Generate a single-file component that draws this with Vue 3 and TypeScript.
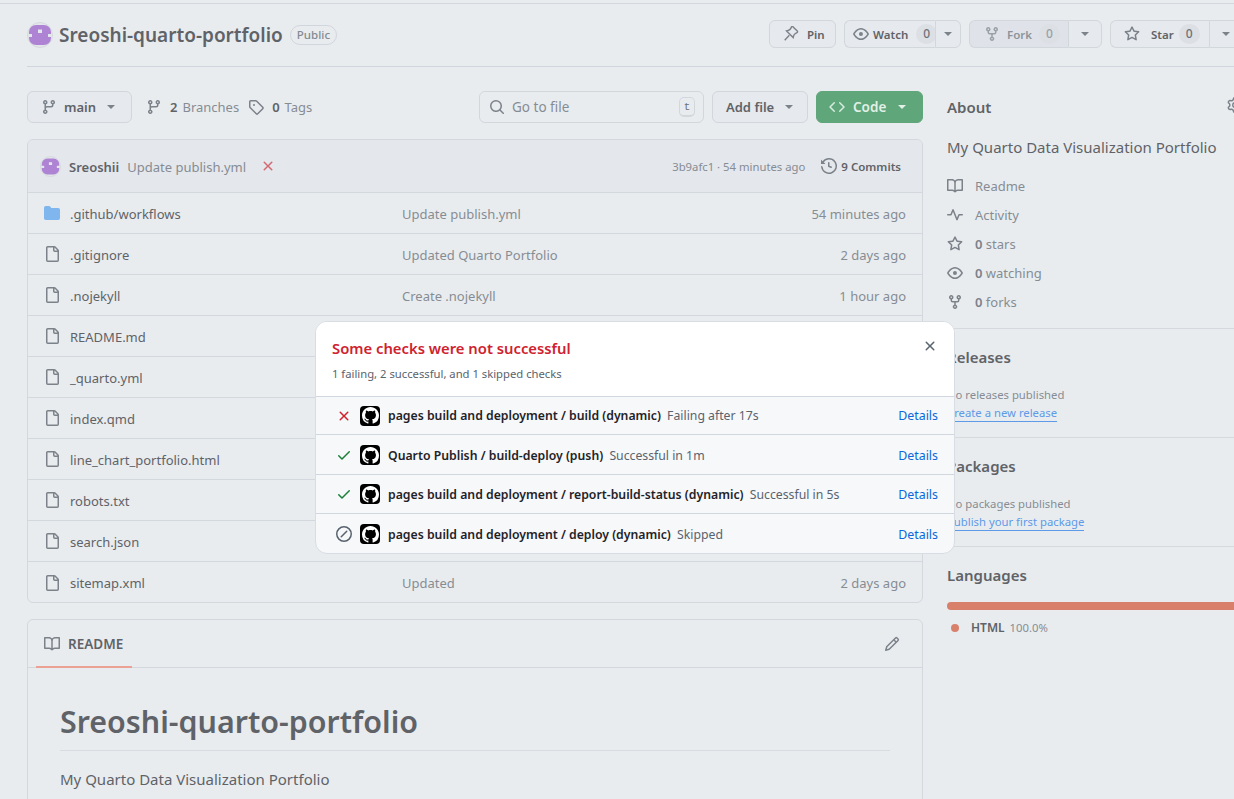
<template>
  <div class="page">
    <header class="repo-head">
      <div class="repo-title">
        <span class="avatar avatar--big">
          <svg viewBox="0 0 24 24"><path :d="identicon" /></svg>
        </span>
        <strong class="repo-name">Sreoshi-quarto-portfolio</strong>
        <span class="label">Public</span>
      </div>
      <div class="repo-actions">
        <button class="btn btn--small pin">
          <svg class="icon" viewBox="0 0 16 16"><path class="pin-line" d="M10.9 1.7l3.4 3.4a1 1 0 0 1-.3 1.6l-1.3.6a3.8 3.8 0 0 0-2.1 2.6l-.4 1.7-6.7-6.7 1.7-.4a3.8 3.8 0 0 0 2.6-2.1l.6-1.3a1 1 0 0 1 1.6-.3zM6.3 9.3l-4.6 4.9" /></svg>
          Pin
        </button>
        <div class="split split--watch">
          <button class="btn btn--small split__main">
            <svg class="icon" viewBox="0 0 16 16"><path :d="icons.eye" /></svg>
            Watch <span class="counter">0</span>
          </button>
          <button class="btn btn--small split__caret"><i class="caret"></i></button>
        </div>
        <div class="split split--fork">
          <button class="btn btn--small split__main">
            <svg class="icon" viewBox="0 0 16 16"><path :d="icons.fork" /></svg>
            Fork <span class="counter">0</span>
          </button>
          <button class="btn btn--small split__caret"><i class="caret"></i></button>
        </div>
        <div class="split split--star">
          <button class="btn btn--small split__main">
            <svg class="icon" viewBox="0 0 16 16"><path :d="icons.star" /></svg>
            Star <span class="counter">0</span>
          </button>
          <button class="btn btn--small split__caret"><i class="caret"></i></button>
        </div>
      </div>
    </header>

    <div class="layout">
      <main class="main">
        <div class="toolbar">
          <button class="btn branch">
            <svg class="icon" viewBox="0 0 16 16"><path :d="icons.branch" /></svg>
            <span>main</span><i class="caret"></i>
          </button>
          <span class="meta-link meta-link--first">
            <svg class="icon" viewBox="0 0 16 16"><path :d="icons.branch" /></svg>
            <b>2</b> Branches
          </span>
          <span class="meta-link">
            <svg class="icon" viewBox="0 0 16 16"><path :d="icons.tag" /></svg>
            <b>0</b> Tags
          </span>
          <div class="search">
            <svg class="icon" viewBox="0 0 16 16"><path :d="icons.search" /></svg>
            <span class="search__text">Go to file</span>
            <kbd>t</kbd>
          </div>
          <button class="btn add-file">Add file<i class="caret"></i></button>
          <button class="btn btn--green">
            <svg class="icon" viewBox="0 0 16 16"><path :d="icons.code" /></svg>
            Code<i class="caret"></i>
          </button>
        </div>

        <section class="files">
          <div class="commit">
            <span class="avatar avatar--small">
              <svg viewBox="0 0 24 24"><path :d="identicon" /></svg>
            </span>
            <span class="commit__author">Sreoshii</span>
            <span class="commit__msg">Update publish.yml</span>
            <svg class="icon commit__fail" viewBox="0 0 16 16"><path :d="icons.x" /></svg>
            <span class="commit__sha">3b9afc1 · 54 minutes ago</span>
            <span class="commit__count">
              <svg class="icon" viewBox="0 0 16 16"><path :d="icons.history" /></svg>
              9 Commits
            </span>
          </div>
          <div v-for="file in files" :key="file.name" class="file-row">
            <svg class="icon file-icon" :class="{ 'file-icon--dir': file.dir }" viewBox="0 0 16 16">
              <path :d="file.dir ? icons.folder : icons.file" />
            </svg>
            <span class="file-name">{{ file.name }}</span>
            <span class="file-msg">{{ file.msg }}</span>
            <span class="file-age">{{ file.age }}</span>
          </div>
        </section>

        <section class="readme">
          <div class="readme__tabs">
            <span class="readme__tab">
              <svg class="icon" viewBox="0 0 16 16"><path :d="icons.book" /></svg>
              README
            </span>
            <svg class="icon readme__edit" viewBox="0 0 16 16"><path :d="icons.pencil" /></svg>
          </div>
          <article class="readme__body">
            <h1>Sreoshi-quarto-portfolio</h1>
            <p>My Quarto Data Visualization Portfolio</p>
          </article>
        </section>
      </main>

      <aside class="side">
        <section class="side__block side__about">
          <div class="side__heading">
            <h2>About</h2>
            <svg class="icon side__gear" viewBox="0 0 16 16"><path :d="icons.gear" /></svg>
          </div>
          <p class="about-text">My Quarto Data Visualization Portfolio</p>
          <ul class="about-list">
            <li v-for="item in aboutItems" :key="item.text">
              <svg class="icon" viewBox="0 0 16 16"><path :d="item.icon" /></svg>
              <span><b v-if="item.count">{{ item.count }}</b> {{ item.text }}</span>
            </li>
          </ul>
        </section>
        <section class="side__block side__empty">
          <h2>Releases</h2>
          <p>No releases published</p>
          <a>Create a new release</a>
        </section>
        <section class="side__block side__empty">
          <h2>Packages</h2>
          <p>No packages published</p>
          <a>Publish your first package</a>
        </section>
        <section class="side__block side__lang">
          <h2>Languages</h2>
          <div class="lang-bar"></div>
          <div class="lang-item"><i></i><b>HTML</b> <span>100.0%</span></div>
        </section>
      </aside>
    </div>

    <div class="checks" role="dialog" aria-label="Checks">
      <div class="checks__head">
        <div>
          <h3>Some checks were not successful</h3>
          <p>1 failing, 2 successful, and 1 skipped checks</p>
        </div>
        <svg class="icon checks__close" viewBox="0 0 16 16"><path :d="icons.x" /></svg>
      </div>
      <div v-for="check in checks" :key="check.name" class="check" :style="{ height: check.height + 'px' }">
        <svg class="icon check__state" :class="'check__state--' + check.state" viewBox="0 0 16 16">
          <path :d="stateIcon[check.state]" />
        </svg>
        <span class="check__app">
          <svg viewBox="0 0 16 16"><path :d="icons.github" /></svg>
        </span>
        <span class="check__text"><b>{{ check.name }}</b> <span>{{ check.note }}</span></span>
        <a class="check__link">Details</a>
      </div>
    </div>
  </div>
</template>

<script setup lang="ts">
type CheckState = 'fail' | 'ok' | 'skip'

const identicon = 'M8 2h8a7 7 0 0 1 7 7v2h-3v3h3v1a7 7 0 0 1-7 7H8a7 7 0 0 1-7-7v-1h3v-3H1V9a7 7 0 0 1 7-7zM10 6.500V10h4V6.500z'

const icons = {
  eye: 'M8 2c1.981 0 3.671.992 4.933 2.078 1.27 1.091 2.187 2.345 2.637 3.023a1.62 1.62 0 0 1 0 1.798c-.45.678-1.367 1.932-2.637 3.023C11.67 13.008 9.981 14 8 14c-1.981 0-3.671-.992-4.933-2.078C1.797 10.83.88 9.576.43 8.898a1.62 1.62 0 0 1 0-1.798c.45-.677 1.367-1.931 2.637-3.022C4.33 2.992 6.019 2 8 2ZM1.679 7.932a.12.12 0 0 0 0 .136c.411.622 1.241 1.75 2.366 2.717C5.176 11.758 6.527 12.5 8 12.500c1.473 0 2.825-.742 3.955-1.715 1.124-.967 1.954-2.096 2.366-2.717a.12.12 0 0 0 0-.136c-.412-.621-1.242-1.75-2.366-2.717C10.824 4.242 9.473 3.5 8 3.500c-1.473 0-2.825.742-3.955 1.715-1.124.967-1.954 2.096-2.366 2.717ZM8 10a2 2 0 1 1-.001-3.999A2 2 0 0 1 8 10Z',
  fork: 'M5 5.372v.878c0 .414.336.75.75.75h4.5a.75.75 0 0 0 .75-.75v-.878a2.25 2.25 0 1 1 1.5 0v.878a2.25 2.25 0 0 1-2.25 2.25h-1.500v2.128a2.251 2.251 0 1 1-1.5 0V8.500h-1.500A2.25 2.25 0 0 1 3.500 6.250v-.878a2.25 2.25 0 1 1 1.5 0ZM5 3.250a.75.75 0 1 0-1.5 0 .75.75 0 0 0 1.5 0Zm6.750.75a.75.75 0 1 0 0-1.500.75.75 0 0 0 0 1.500Zm-3 8.750a.75.75 0 1 0-1.500 0 .75.75 0 0 0 1.500 0Z',
  star: 'M8 .25a.75.75 0 0 1 .673.418l1.882 3.815 4.21.612a.75.75 0 0 1 .416 1.279l-3.046 2.97.719 4.192a.751.751 0 0 1-1.088.791L8 12.347l-3.766 1.98a.75.75 0 0 1-1.088-.79l.72-4.194L.818 6.374a.75.75 0 0 1 .416-1.28l4.21-.611L7.327.668A.75.75 0 0 1 8 .25Zm0 2.445L6.615 5.5a.75.75 0 0 1-.564.41l-3.097.45 2.24 2.184a.75.75 0 0 1 .216.664l-.528 3.084 2.769-1.456a.75.75 0 0 1 .698 0l2.77 1.456-.53-3.084a.75.75 0 0 1 .216-.664l2.24-2.183-3.096-.45a.75.75 0 0 1-.564-.41L8 2.694Z',
  branch: 'M9.500 3.250a2.250 2.250 0 1 1 3 2.122V6A2.500 2.500 0 0 1 10 8.500H6a1 1 0 0 0-1 1v1.128a2.251 2.251 0 1 1-1.500 0V5.372a2.250 2.250 0 1 1 1.500 0v1.836A2.493 2.493 0 0 1 6 7h4a1 1 0 0 0 1-1v-.628A2.250 2.250 0 0 1 9.500 3.250Zm-6 0a.75.75 0 1 0 1.500 0 .75.75 0 0 0-1.500 0Zm8.250-.75a.75.75 0 1 0 0 1.500.75.75 0 0 0 0-1.500ZM4.250 12a.75.75 0 1 0 0 1.500.75.75 0 0 0 0-1.500Z',
  tag: 'M1 7.775V2.750C1 1.784 1.784 1 2.750 1h5.025c.464 0 .91.184 1.238.513l6.250 6.250a1.750 1.750 0 0 1 0 2.474l-5.026 5.026a1.750 1.750 0 0 1-2.474 0l-6.250-6.250A1.752 1.752 0 0 1 1 7.775Zm1.500 0c0 .066.026.13.073.177l6.250 6.250a.25.25 0 0 0 .354 0l5.025-5.025a.25.25 0 0 0 0-.354l-6.250-6.250a.25.25 0 0 0-.177-.073H2.750a.25.25 0 0 0-.25.25ZM6 5a1 1 0 1 1 0 2 1 1 0 0 1 0-2Z',
  search: 'M10.680 11.740a6 6 0 0 1-7.922-8.982 6 6 0 0 1 8.982 7.922l3.040 3.040a.749.749 0 0 1-.326 1.275.749.749 0 0 1-.734-.215ZM11.500 7a4.499 4.499 0 1 0-8.997 0A4.499 4.499 0 0 0 11.500 7Z',
  code: 'm11.280 3.220 4.250 4.250a.75.75 0 0 1 0 1.060l-4.250 4.250a.749.749 0 0 1-1.275-.326.749.749 0 0 1 .215-.734L13.940 8l-3.720-3.720a.749.749 0 0 1 .326-1.275.749.749 0 0 1 .734.215Zm-6.560 0a.751.751 0 0 1 1.042.018.751.751 0 0 1 .018 1.042L2.060 8l3.720 3.720a.749.749 0 0 1-.326 1.275.749.749 0 0 1-.734-.215L.47 8.530a.75.75 0 0 1 0-1.060Z',
  history: 'm.427 1.927 1.215 1.215a8.002 8.002 0 1 1-1.600 5.685.75.75 0 1 1 1.493-.154 6.500 6.500 0 1 0 1.180-4.458l1.358 1.358A.25.25 0 0 1 3.896 6H.25A.25.25 0 0 1 0 5.750V2.104a.25.25 0 0 1 .427-.177ZM7.750 4a.75.75 0 0 1 .75.75v2.992l2.028.812a.75.75 0 0 1-.557 1.392l-2.500-1A.751.751 0 0 1 7 8.250v-3.500A.75.75 0 0 1 7.750 4Z',
  book: 'M0 1.750A.75.75 0 0 1 .75 1h4.253c1.227 0 2.317.59 3 1.501A3.743 3.743 0 0 1 11.006 1h4.245a.75.75 0 0 1 .75.75v10.500a.75.75 0 0 1-.75.75h-4.507a2.250 2.250 0 0 0-1.591.659l-.622.621a.75.75 0 0 1-1.060 0l-.622-.621A2.250 2.250 0 0 0 5.258 13H.75a.75.75 0 0 1-.75-.75Zm7.251 10.324.004-5.073-.002-2.253A2.250 2.250 0 0 0 5.003 2.500H1.500v9h3.757a3.750 3.750 0 0 1 1.994.574ZM8.755 4.750l-.004 7.322a3.752 3.752 0 0 1 1.992-.572H14.500v-9h-3.495a2.250 2.250 0 0 0-2.250 2.250Z',
  pulse: 'M6 2c.306 0 .582.187.696.471L10 10.731l1.304-3.260A.751.751 0 0 1 12 7h3.250a.75.75 0 0 1 0 1.500h-2.742l-1.812 4.528a.751.751 0 0 1-1.392 0L6 4.770 4.696 8.030A.75.75 0 0 1 4 8.500H.75a.75.75 0 0 1 0-1.500h2.742l1.812-4.529A.751.751 0 0 1 6 2Z',
  file: 'M2 1.750C2 .784 2.784 0 3.750 0h6.586c.464 0 .909.184 1.237.513l2.914 2.914c.329.328.513.773.513 1.237v9.586A1.750 1.750 0 0 1 13.250 16h-9.500A1.750 1.750 0 0 1 2 14.250Zm1.750-.25a.25.25 0 0 0-.25.25v12.500c0 .138.112.25.25.25h9.500a.25.25 0 0 0 .25-.25V6h-2.750A1.750 1.750 0 0 1 9 4.250V1.500Zm6.750.062V4.250c0 .138.112.25.25.25h2.688l-.011-.013-2.914-2.914-.013-.011Z',
  folder: 'M1.750 1A1.750 1.750 0 0 0 0 2.750v10.500C0 14.216.784 15 1.750 15h12.500A1.750 1.750 0 0 0 16 13.250v-8.500A1.750 1.750 0 0 0 14.250 3H7.500a.25.25 0 0 1-.2-.1l-.9-1.200C6.070 1.260 5.550 1 5 1H1.750Z',
  x: 'M3.720 3.720a.75.75 0 0 1 1.060 0L8 6.940l3.220-3.220a.749.749 0 0 1 1.275.326.749.749 0 0 1-.215.734L9.060 8l3.220 3.220a.749.749 0 0 1-.326 1.275.749.749 0 0 1-.734-.215L8 9.060l-3.220 3.220a.751.751 0 0 1-1.042-.018.751.751 0 0 1-.018-1.042L6.940 8 3.720 4.780a.75.75 0 0 1 0-1.060Z',
  check: 'M13.780 4.220a.75.75 0 0 1 0 1.060l-7.250 7.250a.75.75 0 0 1-1.060 0L2.220 9.280a.751.751 0 0 1 .018-1.042.751.751 0 0 1 1.042-.018L6 10.940l6.720-6.720a.75.75 0 0 1 1.060 0Z',
  skip: 'M0 8a8 8 0 1 1 16 0A8 8 0 0 1 0 8Zm1.500 0a6.500 6.500 0 1 0 13 0 6.500 6.500 0 0 0-13 0Zm9.780-2.220-5.500 5.500a.749.749 0 0 1-1.275-.326.749.749 0 0 1 .215-.734l5.500-5.500a.751.751 0 0 1 1.042.018.751.751 0 0 1 .018 1.042Z',
  pencil: 'M11.013 1.427a1.750 1.750 0 0 1 2.474 0l1.086 1.086a1.750 1.750 0 0 1 0 2.474l-8.610 8.610c-.21.21-.47.364-.756.445l-3.251.93a.75.75 0 0 1-.927-.928l.929-3.250c.081-.286.235-.547.445-.758l8.610-8.610Zm.176 4.823L9.750 4.810l-6.286 6.287a.253.253 0 0 0-.064.108l-.558 1.953 1.953-.558a.253.253 0 0 0 .108-.064Zm1.238-3.763a.25.25 0 0 0-.354 0L10.811 3.750l1.439 1.440 1.263-1.263a.25.25 0 0 0 0-.354Z',
  gear: 'M8 0a8.200 8.200 0 0 1 .701.031C9.444.095 9.990.645 10.160 1.290l.288 1.107c.018.066.079.158.212.224.231.114.454.243.668.386.123.082.233.09.299.071l1.103-.303c.644-.176 1.392.021 1.820.63.27.385.506.792.704 1.218.315.675.111 1.422-.364 1.891l-.814.806c-.049.048-.098.147-.088.294.016.257.016.515 0 .772-.01.147.038.246.088.294l.814.806c.475.469.679 1.216.364 1.891a7.977 7.977 0 0 1-.704 1.217c-.428.61-1.176.807-1.820.63l-1.102-.302c-.067-.019-.177-.011-.3.071a5.909 5.909 0 0 1-.668.386c-.133.066-.194.158-.211.224l-.29 1.106c-.168.646-.715 1.196-1.458 1.260a8.006 8.006 0 0 1-1.402 0c-.743-.064-1.289-.614-1.458-1.260l-.289-1.106c-.018-.066-.079-.158-.212-.224a5.738 5.738 0 0 1-.668-.386c-.123-.082-.233-.09-.299-.071l-1.103.303c-.644.176-1.392-.021-1.820-.63a8.120 8.120 0 0 1-.704-1.218c-.315-.675-.111-1.422.363-1.891l.815-.806c.05-.048.098-.147.088-.294a6.214 6.214 0 0 1 0-.772c.01-.147-.038-.246-.088-.294l-.815-.806C.635 6.045.431 5.298.746 4.623a7.920 7.920 0 0 1 .704-1.217c.428-.61 1.176-.807 1.820-.63l1.102.302c.067.019.177.011.3-.071.214-.143.437-.272.668-.386.133-.066.194-.158.211-.224l.29-1.106C6.009.645 6.556.095 7.299.03 7.530.01 7.764 0 8 0Zm-.571 1.525c-.036.003-.108.036-.137.146l-.289 1.105c-.147.561-.549.967-.998 1.189-.173.086-.34.183-.5.29-.417.278-.97.423-1.529.27l-1.103-.303c-.109-.03-.175.016-.195.045-.22.312-.412.644-.573.99-.014.031-.021.11.059.19l.815.806c.411.406.562.957.53 1.456a4.709 4.709 0 0 0 0 .582c.032.499-.119 1.050-.53 1.456l-.815.806c-.081.08-.073.159-.059.19.162.346.353.677.573.989.02.03.085.076.195.046l1.102-.303c.56-.153 1.113-.008 1.530.27.161.107.328.204.501.29.447.222.85.629.997 1.189l.289 1.105c.029.109.101.143.137.146a6.600 6.600 0 0 0 1.142 0c.036-.003.108-.036.137-.146l.289-1.105c.147-.561.549-.967.998-1.189.173-.086.34-.183.5-.29.417-.278.97-.423 1.529-.27l1.103.303c.109.029.175-.016.195-.045.22-.313.411-.644.573-.99.014-.031.021-.11-.059-.19l-.815-.806c-.411-.406-.562-.957-.53-1.456a4.709 4.709 0 0 0 0-.582c-.032-.499.119-1.050.53-1.456l.815-.806c.081-.08.073-.159.059-.19a6.464 6.464 0 0 0-.573-.989c-.02-.03-.085-.076-.195-.046l-1.102.303c-.56.153-1.113.008-1.530-.27a4.440 4.440 0 0 0-.501-.29c-.447-.222-.85-.629-.997-1.189l-.289-1.105c-.029-.11-.101-.143-.137-.146a6.600 6.600 0 0 0-1.142 0ZM11 8a3 3 0 1 1-6 0 3 3 0 0 1 6 0ZM9.500 8a1.500 1.500 0 1 0-3.001.001A1.500 1.500 0 0 0 9.500 8Z',
  github: 'M8 0c4.420 0 8 3.580 8 8a8.013 8.013 0 0 1-5.450 7.590c-.4.08-.55-.17-.55-.38 0-.27.01-1.130.01-2.200 0-.75-.25-1.230-.54-1.480 1.780-.2 3.650-.88 3.650-3.950 0-.88-.31-1.590-.82-2.150.08-.2.36-1.020-.08-2.120 0 0-.67-.22-2.200.82-.64-.18-1.320-.27-2-.27-.68 0-1.360.09-2 .27-1.530-1.030-2.200-.82-2.200-.82-.44 1.100-.16 1.920-.08 2.120-.51.56-.82 1.280-.82 2.150 0 3.060 1.860 3.750 3.640 3.950-.23.2-.44.55-.51 1.070-.46.21-1.610.55-2.330-.66-.15-.24-.6-.83-1.230-.82-.67.01-.27.38.01.53.34.19.73.9.82 1.130.16.45.68 1.310 2.690.94 0 .67.01 1.300.01 1.490 0 .21-.15.45-.55.38A7.995 7.995 0 0 1 0 8c0-4.420 3.580-8 8-8Z'
}

const stateIcon: Record<CheckState, string> = {
  fail: icons.x,
  ok: icons.check,
  skip: icons.skip
}

// rows behind the popup show no message or age in the screenshot
const files = [
  { name: '.github/workflows', msg: 'Update publish.yml', age: '54 minutes ago', dir: true },
  { name: '.gitignore', msg: 'Updated Quarto Portfolio', age: '2 days ago' },
  { name: '.nojekyll', msg: 'Create .nojekyll', age: '1 hour ago' },
  { name: 'README.md', msg: '', age: '' },
  { name: '_quarto.yml', msg: '', age: '' },
  { name: 'index.qmd', msg: '', age: '' },
  { name: 'line_chart_portfolio.html', msg: '', age: '' },
  { name: 'robots.txt', msg: '', age: '' },
  { name: 'search.json', msg: '', age: '' },
  { name: 'sitemap.xml', msg: 'Updated', age: '2 days ago' }
]

const aboutItems = [
  { icon: icons.book, text: 'Readme' },
  { icon: icons.pulse, text: 'Activity' },
  { icon: icons.star, count: '0', text: 'stars' },
  { icon: icons.eye, count: '0', text: 'watching' },
  { icon: icons.fork, count: '0', text: 'forks' }
]

const checks: { name: string; note: string; state: CheckState; height: number }[] = [
  { name: 'pages build and deployment / build (dynamic)', note: 'Failing after 17s', state: 'fail', height: 38 },
  { name: 'Quarto Publish / build-deploy (push)', note: 'Successful in 1m', state: 'ok', height: 40 },
  { name: 'pages build and deployment / report-build-status (dynamic)', note: 'Successful in 5s', state: 'ok', height: 39 },
  { name: 'pages build and deployment / deploy (dynamic)', note: 'Skipped', state: 'skip', height: 39 }
]
</script>

<style>
html,
body {
  margin: 0;
  overflow: hidden;
  background: #e9ecef;
}
</style>

<style scoped>
.page {
  position: relative;
  width: 1234px;
  height: 796px;
  overflow: hidden;
  box-sizing: border-box;
  border-top: 1px solid #d3d8de;
  margin-top: 3px;
  background: #e9ecef;
  color: #5f6368;
  font-family: "Noto Sans", "Open Sans", sans-serif;
  font-size: 13px;
}

.icon {
  width: 16px;
  height: 16px;
  flex: none;
  fill: #7c828a;
}

.caret {
  display: inline-block;
  width: 0;
  height: 0;
  border-top: 4px solid #7c828a;
  border-left: 4px solid transparent;
  border-right: 4px solid transparent;
}

.avatar {
  display: inline-flex;
  align-items: center;
  justify-content: center;
  flex: none;
  box-sizing: border-box;
  border-radius: 50%;
  background: #e3e6ea;
  border: 1px solid #d6dade;
}

.avatar svg {
  fill: #ae83d3;
}

.avatar--big {
  width: 26px;
  height: 26px;
}

.avatar--big svg {
  width: 24px;
  height: 24px;
}

.avatar--small {
  width: 21px;
  height: 21px;
}

.avatar--small svg {
  width: 19px;
  height: 19px;
}

/* header */
.repo-head {
  display: flex;
  justify-content: space-between;
  align-items: center;
  height: 63px;
  box-sizing: border-box;
  margin-left: 27px;
  border-bottom: 1px solid #d0d6dd;
}

.repo-title {
  display: flex;
  align-items: center;
  gap: 6px;
}

.repo-name {
  font-size: 19px;
  font-weight: 600;
  color: #5f6368;
}

.label {
  margin-left: 1px;
  padding: 0 6px;
  height: 18px;
  line-height: 17px;
  border: 1px solid #d0d6dd;
  border-radius: 10px;
  font-size: 11.5px;
  font-weight: 500;
  color: #848a92;
}

.repo-actions {
  display: flex;
  gap: 8px;
  margin-right: -9px;
  margin-bottom: 2px;
}

.btn {
  display: inline-flex;
  align-items: center;
  box-sizing: border-box;
  height: 32px;
  border: 1px solid #d2d7dc;
  border-radius: 6px;
  background: #e6e9ed;
  color: #5f6368;
  font: inherit;
  font-weight: 600;
  font-size: 13px;
  padding: 0 11px;
  white-space: nowrap;
}

.btn--small {
  height: 28px;
  font-size: 11.5px;
  gap: 8px;
  padding: 0 13px;
}

.pin {
  width: 67px;
}

.pin-line {
  fill: none;
  stroke: #7c828a;
  stroke-width: 1.4;
}

.split {
  display: flex;
}

.split__main {
  border-radius: 6px 0 0 6px;
  border-right: 0;
  gap: 4px;
  padding: 0 0 0 8px;
}

.split__caret {
  border-radius: 0 6px 6px 0;
  width: 26px;
  padding: 0;
  justify-content: center;
}

.split--watch .split__main {
  width: 91px;
}

.split--watch .counter {
  margin-left: 4px;
}

.split--fork .split__main {
  width: 99px;
  padding-left: 14px;
  gap: 7px;
}

.split--fork .split__caret,
.split--star .split__caret {
  width: 34px;
}

.split--star .split__main {
  width: 99px;
  padding-left: 13px;
  gap: 11px;
}

.split--star .counter {
  margin-left: -6px;
}

.split--fork .split__main {
  background: #dfe3e9;
  color: #8d939b;
}

.split--fork .icon {
  fill: #9aa0a8;
}

.split--fork .counter {
  color: #9aa0a8;
}

.counter {
  box-sizing: border-box;
  flex: none;
  width: 21px;
  text-align: center;
  height: 20px;
  line-height: 20px;
  border-radius: 10px;
  background: #dcdfe4;
  color: #6c7279;
  font-weight: 500;
  font-size: 12px;
}

/* body */
.layout {
  display: grid;
  grid-template-columns: 896px 296px;
  gap: 24px;
  padding: 24px 0 0 27px;
}

.toolbar {
  display: flex;
  align-items: center;
  height: 32px;
  margin-bottom: 16px;
}

.branch {
  width: 105px;
  gap: 7px;
  padding-left: 13px;
}

.branch .caret {
  margin-left: 4px;
}

.meta-link {
  display: inline-flex;
  align-items: center;
  gap: 5px;
  margin-left: 9px;
  color: #868c94;
}

.meta-link--first {
  margin-left: 14px;
}

.meta-link b {
  margin-left: 3px;
  font-weight: 600;
  color: #5f6368;
}

.search {
  display: flex;
  align-items: center;
  box-sizing: border-box;
  width: 225px;
  height: 32px;
  margin-left: auto;
  padding: 0 8px 0 9px;
  border: 1px solid #d2d7dc;
  border-radius: 6px;
  color: #868c94;
  font-size: 13.5px;
}

.search__text {
  margin-left: 7px;
  flex: 1;
}

.search kbd {
  box-sizing: border-box;
  width: 16px;
  height: 20px;
  line-height: 18px;
  text-align: center;
  border: 1px solid #d2d7dc;
  border-bottom-width: 2px;
  border-radius: 5px;
  font-family: "Liberation Mono", monospace;
  font-size: 11px;
  color: #6c7279;
}

.add-file {
  width: 96px;
  margin-left: 8px;
  gap: 11px;
  padding-left: 13px;
}

.btn--green {
  width: 107px;
  margin-left: 8px;
  gap: 8px;
  padding-left: 12px;
  font-size: 13.5px;
  background: #5fa67a;
  border-color: #5fa67a;
  color: #e2f0e7;
}

.btn--green .icon {
  fill: #d8ebdf;
}

.btn--green .caret {
  border-top-color: #e2f0e7;
  margin-left: 4px;
}

.files {
  box-sizing: border-box;
  height: 464px;
  border: 1px solid #d3d8de;
  border-radius: 6px;
  overflow: hidden;
}

.commit {
  display: flex;
  align-items: center;
  box-sizing: border-box;
  height: 53px;
  padding: 0 21px 0 12px;
  background: #e4e7eb;
  border-bottom: 1px solid #d3d8de;
}

.commit__author {
  margin-left: 8px;
  padding-top: 2px;
  font-weight: 600;
  font-size: 13px;
}

.commit__msg {
  margin-left: 8px;
  padding-top: 2px;
  color: #868c94;
}

.commit__fail {
  margin-left: 14px;
  fill: #d26a72;
}

.commit__sha {
  margin-left: auto;
  color: #868c94;
  font-size: 11.3px;
}

.commit__count {
  display: inline-flex;
  align-items: center;
  gap: 4px;
  margin-left: 16px;
  font-weight: 600;
  font-size: 11.5px;
}

.file-row {
  display: grid;
  grid-template-columns: 16px 322px 1fr auto;
  column-gap: 10px;
  align-items: center;
  height: 41px;
  box-sizing: border-box;
  padding: 0 16px;
  border-bottom: 1px solid #d3d8de;
}

.file-row span {
  padding-top: 2px;
}

.file-row:last-child {
  border-bottom: 0;
}

.file-row:last-child span {
  padding-top: 0;
}

.file-icon--dir {
  fill: #7fb6ee;
}

.file-msg,
.file-age {
  color: #868c94;
}

.readme {
  margin-top: 16px;
  border: 1px solid #d3d8de;
  border-radius: 6px 6px 0 0;
  height: 300px;
}

.readme__tabs {
  display: flex;
  align-items: center;
  justify-content: space-between;
  box-sizing: border-box;
  height: 48px;
  padding: 0 22px 0 8px;
  border-bottom: 1px solid #d3d8de;
}

.readme__tab {
  display: inline-flex;
  align-items: center;
  gap: 8px;
  box-sizing: border-box;
  height: 48px;
  width: 96px;
  padding: 2px 0 0 8px;
  border-bottom: 2px solid #eba294;
  font-weight: 600;
  font-size: 13.5px;
}

.readme__body {
  padding: 34px 32px;
}

.readme__body h1 {
  margin: 0 0 18px;
  padding-bottom: 8px;
  font-size: 30.4px;
  line-height: 40px;
  font-weight: 600;
  border-bottom: 1px solid #d8dce1;
}

.readme__body p {
  margin: 0;
  font-size: 15px;
}

/* sidebar */
.side__block {
  border-bottom: 1px solid #d6dade;
  padding: 18px 0 15px;
}

.side h2 {
  margin: 0;
  font-size: 15px;
  line-height: 20px;
  font-weight: 600;
}

.side__heading {
  display: flex;
  justify-content: space-between;
}

.side__about {
  padding: 6px 0 12px;
}

.about-text {
  margin: 19px 0 13px;
  font-size: 15px;
  line-height: 22px;
}

.about-list {
  list-style: none;
  margin: 0;
  padding: 0;
  color: #868c94;
}

.about-list li {
  display: flex;
  align-items: center;
  gap: 12px;
  height: 29px;
}

.about-list b {
  font-weight: 600;
  color: #7c828a;
}

.side__empty h2 {
  margin-bottom: 19px;
}

.side__empty p {
  margin: 0;
  color: #868c94;
  font-size: 11.3px;
  line-height: 18px;
}

.side__empty a {
  display: block;
  width: fit-content;
  color: #5d9ae8;
  font-size: 11.3px;
  line-height: 17px;
  border-bottom: 1px solid #5d9ae8;
}

.side__lang {
  border: 0;
  padding-top: 18px;
}

.lang-bar {
  height: 8px;
  margin-top: 17px;
  border-radius: 4px;
  background: #d9806b;
}

.lang-item {
  display: flex;
  align-items: center;
  margin-top: 10px;
  padding-left: 4px;
  font-size: 12px;
  line-height: 16px;
  color: #868c94;
  gap: 5px;
}

.lang-item i {
  width: 8px;
  height: 8px;
  border-radius: 50%;
  background: #d9806b;
  margin-right: 7px;
}

.lang-item b {
  font-weight: 600;
  color: #5f6368;
}

.lang-item span {
  font-size: 11.3px;
}

/* checks popup */
.checks {
  position: absolute;
  left: 315px;
  top: 317px;
  width: 640px;
  box-sizing: border-box;
  border: 1px solid #d8dde3;
  border-radius: 12px;
  overflow: hidden;
  background: #f6f8fa;
  color: #1f2328;
}

.checks__head {
  display: flex;
  justify-content: space-between;
  box-sizing: border-box;
  height: 75px;
  padding: 16px 16px 0 16px;
  background: #fff;
  border-bottom: 1px solid #d0d7de;
}

.checks__head h3 {
  margin: 0;
  font-size: 14.8px;
  line-height: 20px;
  font-weight: 600;
  color: #cf222e;
}

.checks__head p {
  margin: 8px 0 0;
  font-size: 11.25px;
  line-height: 16px;
  color: #59636e;
}

.checks__close {
  fill: #59636e;
}

.check {
  display: flex;
  align-items: center;
  box-sizing: border-box;
  padding: 0 16px 0 20px;
  border-bottom: 1px solid #d0d7de;
  font-size: 12.25px;
}

.check:nth-child(odd) {
  padding-top: 1px;
}

.check:last-child {
  border-bottom: 0;
}

.check__state--fail {
  fill: #cf222e;
}

.check__state--ok {
  fill: #1a7f37;
}

.check__state--skip {
  fill: #59636e;
}

.check__app {
  display: flex;
  align-items: center;
  justify-content: center;
  flex: none;
  width: 20px;
  height: 20px;
  margin-left: 8px;
  border-radius: 4px;
  background: #000;
}

.check__app svg {
  width: 17px;
  height: 17px;
  fill: #fff;
}

.check__text {
  flex: 1;
  margin-left: 8px;
  white-space: nowrap;
}

.check__text b {
  font-weight: 600;
}

.check__text span {
  margin-left: 3px;
  color: #59636e;
}

.check__link {
  color: #0969da;
  font-size: 12.4px;
}
</style>
